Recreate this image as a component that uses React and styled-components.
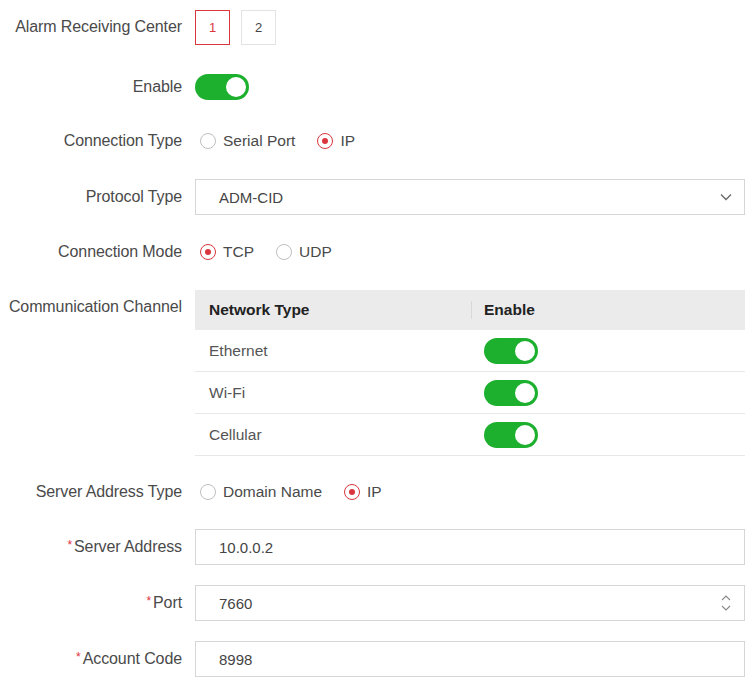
import React from "react";
import styled, { createGlobalStyle } from "styled-components";

const Global = createGlobalStyle`
  body { margin: 0; background: #fff; font-family: "Liberation Sans", Arial, sans-serif; }
`;

const Page = styled.div`
  width: 754px; padding: 9px 9px 0 0; box-sizing: border-box;
  display: flex; flex-direction: column; gap: 20px;
`;
const Row = styled.div`
  display: grid; grid-template-columns: 182px 1fr; column-gap: 13px;
  align-items: ${p => (p.$top ? "start" : "center")};
  min-height: 36px; margin-top: ${p => p.$mt || 0}px;
`;
const Label = styled.div`
  text-align: right; font-size: 16px; letter-spacing: -0.1px; color: #4a4a4a; white-space: nowrap;
  line-height: ${p => (p.$lh ? p.$lh + "px" : "normal")};
`;
const Star = styled.span` color: #e0303a; font-size: 12px; margin-right: 2px; vertical-align: 3px;`;
const Tabs = styled.div` display: flex; gap: 11px; `;
const Tab = styled.div`
  width: 35px; height: 35px; box-sizing: border-box; display: flex; align-items: center; justify-content: center;
  font-size: 13px; border: 1px solid ${p => (p.$active ? "#d9363e" : "#e3e3e3")};
  color: ${p => (p.$active ? "#d9363e" : "#444")};
`;
const Switch = styled.div`
  width: 54px; height: 26px; border-radius: 13px; background: #1cb02e; position: relative;
  &::after { content: ""; position: absolute; right: 3px; top: 3px; width: 20px; height: 20px; border-radius: 50%; background: #fff; }
`;
const Radios = styled.div` display: flex; align-items: center; gap: 22px; padding-left: 5px; `;
const RadioItem = styled.label` display: flex; align-items: center; gap: 7px; font-size: 15.5px; color: #4a4a4a; `;
const Circle = styled.span`
  width: 16px; height: 16px; box-sizing: border-box; border-radius: 50%;
  border: 1px solid ${p => (p.$on ? "#d9363e" : "#bfbfbf")}; display: flex; align-items: center; justify-content: center;
  &::after { content: ""; width: 6px; height: 6px; border-radius: 50%; background: ${p => (p.$on ? "#d9363e" : "transparent")}; }
`;
const Box = styled.div`
  height: 36px; box-sizing: border-box; border: 1px solid #d6d6d6; display: flex; align-items: center;
  justify-content: space-between; padding: 0 12px 0 23px; font-size: 15px; color: #444;
`;
const Table = styled.div` display: flex; flex-direction: column; `;
const TRow = styled.div`
  display: grid; grid-template-columns: 262px 1fr; align-items: center;
  height: ${p => (p.$head ? 40 : 41)}px; background: ${p => (p.$head ? "#ebebeb" : "#fff")};
  border-bottom: ${p => (p.$head ? "none" : "1px solid #e8e8e8")};
  padding-left: 14px; font-size: 15.5px; color: ${p => (p.$head ? "#222" : "#555")};
  font-weight: ${p => (p.$head ? 700 : 400)};
`;
const HeadCell = styled.div` border-left: 1px solid #d8d8d8; padding-left: 12px; line-height: 18px; `;
const Cell = styled.div` padding-left: 13px; `;

const Radio = ({ on, children }) => (
  <RadioItem><Circle $on={on} />{children}</RadioItem>
);

export default function App() {
  return (
    <>
      <Global />
      <Page>
        <Row>
          <Label>Alarm Receiving Center</Label>
          <Tabs><Tab $active>1</Tab><Tab>2</Tab></Tabs>
        </Row>
        <Row $mt={4}><Label>Enable</Label><Switch /></Row>
        <Row $mt={-2}>
          <Label>Connection Type</Label>
          <Radios><Radio>Serial Port</Radio><Radio on>IP</Radio></Radios>
        </Row>
        <Row>
          <Label>Protocol Type</Label>
          <Box>ADM-CID
            <svg width="12" height="8" viewBox="0 0 12 8"><path d="M1 1.5l5 5 5-5" fill="none" stroke="#666" strokeWidth="1.3" /></svg>
          </Box>
        </Row>
        <Row $mt={-1}>
          <Label>Connection Mode</Label>
          <Radios><Radio on>TCP</Radio><Radio>UDP</Radio></Radios>
        </Row>
        <Row $top>
          <Label $lh={34}>Communication Channel</Label>
          <Table>
            <TRow $head><div>Network Type</div><HeadCell>Enable</HeadCell></TRow>
            <TRow><div>Ethernet</div><Cell><Switch /></Cell></TRow>
            <TRow><div>Wi-Fi</div><Cell><Switch /></Cell></TRow>
            <TRow><div>Cellular</div><Cell><Switch /></Cell></TRow>
          </Table>
        </Row>
        <Row $mt={-2}>
          <Label>Server Address Type</Label>
          <Radios><Radio>Domain Name</Radio><Radio on>IP</Radio></Radios>
        </Row>
        <Row $mt={-1}><Label><Star>*</Star>Server Address</Label><Box>10.0.0.2</Box></Row>
        <Row>
          <Label><Star>*</Star>Port</Label>
          <Box>7660
            <svg width="12" height="18" viewBox="0 0 12 18"><path d="M2 6l4-4 4 4M2 12l4 4 4-4" fill="none" stroke="#888" strokeWidth="1.1" /></svg>
          </Box>
        </Row>
        <Row><Label><Star>*</Star>Account Code</Label><Box>8998</Box></Row>
      </Page>
    </>
  );
}
